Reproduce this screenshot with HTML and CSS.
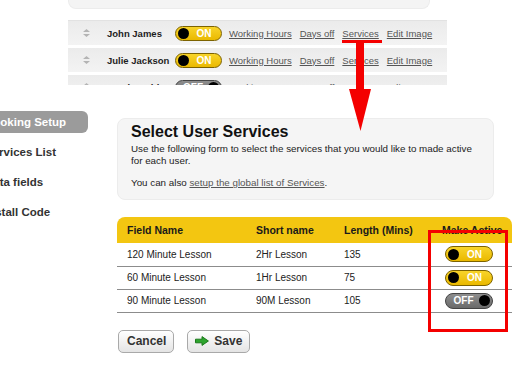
FILE: index.html
```html
<!DOCTYPE html>
<html lang="en">
<head>
	<meta charset="UTF-8">
	<title>Select User Services</title>
	<link rel="stylesheet" href="styles.css">
</head>
<body>
	<div class="page">
		<div class="users">
			<div class="users-top"></div>
			<div class="users-rule"></div>
			<div class="user-row">
				<svg class="sort" width="7" height="8" viewBox="0 0 7 8"><path d="M3.5 0L7 3H0z M0 5h7L3.5 8z" fill="#b4b4b4"/></svg>
				<span class="user-name">John James</span>
				<span class="tog on small"><i></i><b>ON</b></span>
				<div class="user-links">
					<a href="#">Working Hours</a>
					<a href="#">Days off</a>
					<a href="#">Services</a>
					<a href="#">Edit Image</a>
				</div>
			</div>
			<div class="user-row">
				<svg class="sort" width="7" height="8" viewBox="0 0 7 8"><path d="M3.5 0L7 3H0z M0 5h7L3.5 8z" fill="#b4b4b4"/></svg>
				<span class="user-name">Julie Jackson</span>
				<span class="tog on small"><i></i><b>ON</b></span>
				<div class="user-links">
					<a href="#">Working Hours</a>
					<a href="#">Days off</a>
					<a href="#">Services</a>
					<a href="#">Edit Image</a>
				</div>
			</div>
			<div class="user-row">
				<svg class="sort" width="7" height="8" viewBox="0 0 7 8"><path d="M3.5 0L7 3H0z M0 5h7L3.5 8z" fill="#b4b4b4"/></svg>
				<span class="user-name">Sarah Smith</span>
				<span class="tog off small"><b>OFF</b><i></i></span>
				<div class="user-links">
					<a href="#">Working Hours</a>
					<a href="#">Days off</a>
					<a href="#">Services</a>
					<a href="#">Edit Image</a>
				</div>
			</div>
		</div>

		<div class="setup">
			<ul class="nav">
				<li class="active">Booking Setup</li>
				<li>Services List</li>
				<li>Data fields</li>
				<li>Install Code</li>
			</ul>
			<div class="main">
				<div class="intro">
					<h1>Select User Services</h1>
					<p>Use the following form to select the services that you would like to made active for each user.</p>
					<p>You can also <a href="#">setup the global list of Services</a>.</p>
				</div>
				<table class="services">
					<thead>
						<tr>
							<th class="c1">Field Name</th>
							<th class="c2">Short name</th>
							<th class="c3">Length (Mins)</th>
							<th class="c4">Make Active</th>
						</tr>
					</thead>
					<tbody>
						<tr>
							<td>120 Minute Lesson</td>
							<td>2Hr Lesson</td>
							<td>135</td>
							<td><span class="tog on"><i></i><b>ON</b></span></td>
						</tr>
						<tr>
							<td>60 Minute Lesson</td>
							<td>1Hr Lesson</td>
							<td>75</td>
							<td><span class="tog on"><i></i><b>ON</b></span></td>
						</tr>
						<tr>
							<td>90 Minute Lesson</td>
							<td>90M Lesson</td>
							<td>105</td>
							<td><span class="tog off"><b>OFF</b><i></i></span></td>
						</tr>
					</tbody>
				</table>
				<div class="actions">
					<button class="btn">Cancel</button>
					<button class="btn">
						<svg width="14" height="10" viewBox="0 0 14 10"><path d="M0.5 3.2h6.5V0.6L13.4 5 7 9.4V6.8H0.5z" fill="#2ea52e" stroke="#1c7a1c" stroke-width="1"/></svg>
						Save
					</button>
				</div>
			</div>
		</div>

		<!-- annotations drawn over the screenshot -->
		<div class="mark-line"></div>
		<svg class="mark-arrow" width="24" height="92" viewBox="0 0 24 92"><path d="M8 0h8v49h7L12.5 91 1 49h7z" fill="#f40000"/></svg>
		<div class="mark-box"></div>
	</div>
</body>
</html>
```

FILE: styles.css
```css
*{margin: 0;padding: 0;box-sizing: border-box;}
body{
	background: #fff;
	font-family: "Liberation Sans", Arial, sans-serif;
	color: #222;
	overflow: hidden;
}
ul{list-style: none;}
a{color: #555;}
.page{
	position: relative;
	width: 517px;
	height: 385px;
}

/* user list snippet */
.users{
	margin-left: 68px;
	width: 379px;
	height: 85px;
	overflow: hidden;
}
.users-top{
	width: 362px;
	height: 9px;
	background: #f4f4f4;
	border: 1px solid #ececec;
	border-top: 0;
	border-radius: 0 0 8px 8px;
}
.users-rule{
	height: 1px;
	margin-top: 11px;
	background: #e2e2e2;
}
.user-row{
	display: flex;
	align-items: center;
	height: 24px;
	margin-bottom: 3px;
	padding-left: 15px;
	background: linear-gradient(#ebebeb, #f3f3f3);
}
.sort{
	margin-right: 17px;
}
.user-name{
	width: 68px;
	font-size: 9.5px;
	font-weight: bold;
	color: #1e1e1e;
	white-space: nowrap;
}
.user-links{
	display: flex;
	gap: 8px;
	margin-left: 7px;
	font-size: 9.5px;
}

/* on / off switch */
.tog{
	display: inline-flex;
	align-items: center;
	width: 48px;
	height: 16px;
	border-radius: 8px;
	padding: 0 2px;
	vertical-align: middle;
}
.tog.small{
	width: 47px;
	height: 15px;
}
.tog i{
	width: 11px;
	height: 11px;
	border-radius: 50%;
	background: #000;
}
.tog b{
	flex: 1;
	text-align: center;
	font-size: 10px;
	color: #fff;
}
.tog.on{
	background: linear-gradient(#f8d42a, #eab900);
	border: 1px solid #7d6300;
}
.tog.off{
	background: linear-gradient(#8e8e8e, #6a6a6a);
	border: 1px solid #444;
}

/* setup area */
.setup{
	display: flex;
}
.nav{
	width: 103px;
	margin: 26px 29px 0 -15px;
}
.nav li{
	height: 22px;
	line-height: 22px;
	margin-bottom: 8px;
	font-size: 11.5px;
	font-weight: bold;
	color: #333;
	white-space: nowrap;
}
.nav .active{
	background: #9b9b9b;
	color: #fff;
	border-radius: 0 6px 6px 0;
}
.main{
	margin-top: 33px;
}
.intro{
	width: 377px;
	height: 82px;
	padding: 3px 13px 0;
	background: #f5f5f5;
	border: 1px solid #ececec;
	border-radius: 8px;
}
.intro h1{
	font-size: 16px;
	line-height: 19px;
	margin-bottom: 2px;
	color: #111;
}
.intro p{
	font-size: 9.8px;
	line-height: 12px;
	color: #222;
}
.intro p + p{
	margin-top: 10px;
}

.services{
	width: 395px;
	margin-top: 17px;
	border-collapse: collapse;
	font-size: 10px;
}
.services th{
	height: 26px;
	background: #f3c611;
	font-size: 10.5px;
	text-align: left;
	color: #1a1a1a;
	padding: 0 0 0 10px;
}
.services th.c1{width: 129px;border-radius: 8px 0 0 0;}
.services th.c2{width: 88px;}
.services th.c3{width: 99px;}
.services th.c4{width: 79px;padding-left: 9px;border-radius: 0 8px 0 0;}
.services td{
	height: 23px;
	padding: 0 0 0 10px;
	border-bottom: 1px solid #8c8c8c;
	color: #222;
}
.services td:last-child{
	padding-left: 12px;
}

.actions{
	display: flex;
	gap: 13px;
	margin-top: 17px;
	padding-left: 1px;
}
.btn{
	display: flex;
	align-items: center;
	gap: 5px;
	height: 23px;
	padding: 0 7px 0 8px;
	border: 1px solid #a9a9a9;
	border-radius: 5px;
	background: linear-gradient(#fff, #e4e4e4);
	font: bold 12px "Liberation Sans", Arial, sans-serif;
	color: #333;
}
.btn svg{
	margin-left: -1px;
}

/* red annotations */
.mark-line{
	position: absolute;
	left: 342px;
	top: 40px;
	width: 40px;
	height: 3px;
	background: #f40000;
}
.mark-arrow{
	position: absolute;
	left: 348px;
	top: 40px;
}
.mark-box{
	position: absolute;
	left: 428px;
	top: 230px;
	width: 80px;
	height: 102px;
	border: 3px solid #f40000;
}
```
